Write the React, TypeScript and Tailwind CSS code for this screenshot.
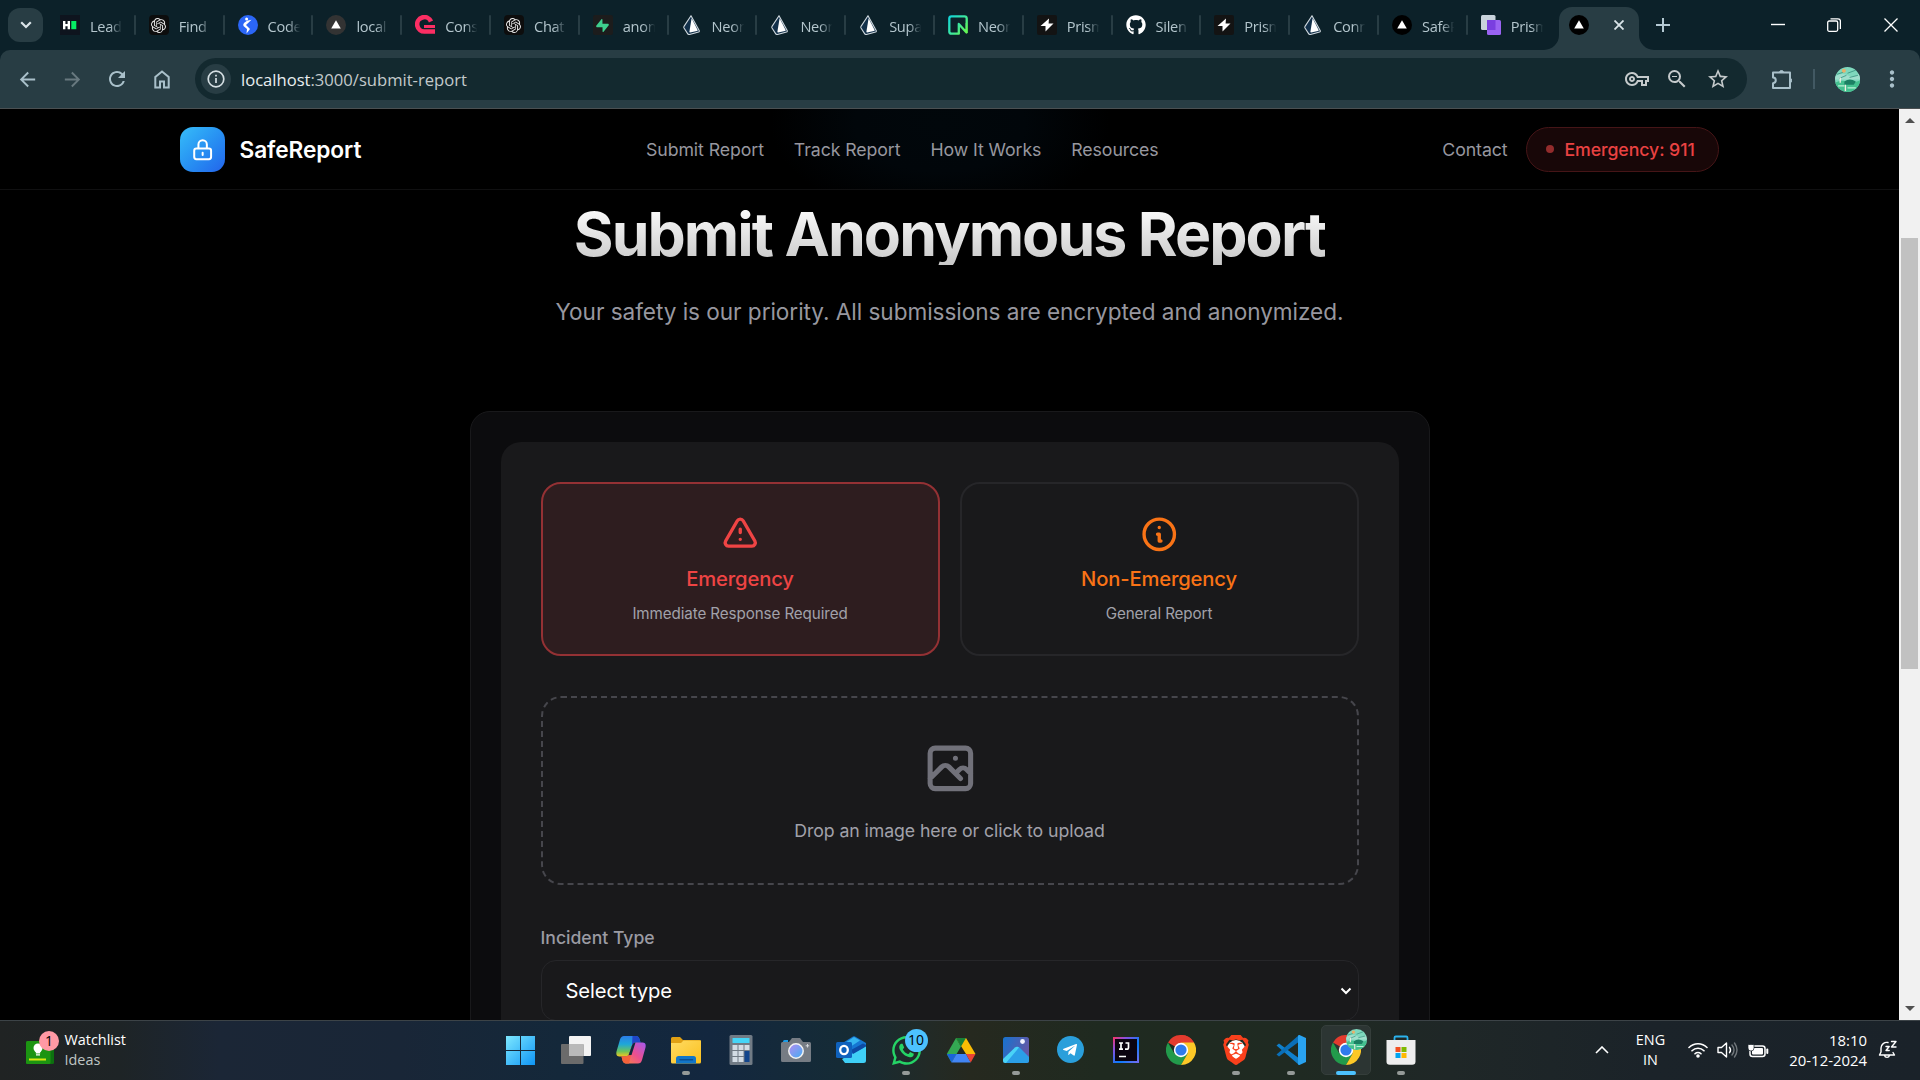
import type { ReactNode } from "react";
import { MdArrowBack, MdArrowForward, MdRefresh, MdOutlineVpnKey, MdZoomOut, MdStarBorder, MdMoreVert } from "react-icons/md";
import { SiOpenai, SiSupabase, SiBrave } from "react-icons/si";
import { FaWhatsapp, FaTelegramPlane, FaGithub } from "react-icons/fa";

/* ---------- favicons ---------- */

const OpenAI = () => (
  <span className="flex size-5 items-center justify-center rounded-[4px] bg-[#0d0d0d] text-[#e8e8e8]"><SiOpenai size={15} /></span>
);
const Prisma = () => (
  <svg viewBox="0 0 20 20" className="size-5">
    <path d="M9 0.7 L17.2 15.6 Q17.6 16.6 16.6 17 L7.4 19.5 Q6.2 19.6 5.6 18.6 L2 13 Q1.6 12.2 2 11.4 Z" fill="#12304a" stroke="#cfd8de" strokeWidth="1.1" strokeLinejoin="round" />
    <path d="M9.6 3.2 L15.6 15 Q15.8 15.8 15 16 L8 17.4 Q7.4 17.4 7.4 16.8 Z" fill="#fff" />
  </svg>
);
const Bolt = ({ green }: { green?: boolean }) => (
  <span className={`flex size-5 items-center justify-center rounded-[2px] ${green ? "bg-[#1c1c1c] text-[#3ecf8e]" : "bg-[#131313] text-white"}`}>
    {green ? <SiSupabase size={13} /> : (
      <svg viewBox="0 0 20 20" className="size-5" fill="#fff"><path d="M12 3.5 L3.5 11 H8.5 V16.5 L16.5 8.5 H11.6 Z" /></svg>
    )}
  </span>
);
const Triangle = ({ grey }: { grey?: boolean }) => (
  <svg viewBox="0 0 20 20" className="size-5">
    <circle cx="10" cy="10" r="10" fill={grey ? "#333333" : "#000"} />
    <path d="M10 5.2 L14.8 13.6 H5.2 Z" fill="#fff" />
  </svg>
);
const Hi = () => (
  <svg viewBox="0 0 20 20" className="size-5">
    <rect width="20" height="20" fill="#0e141e" />
    <path d="M3 6h2.4v3h2.2V6H10v8.200H7.600v-3H5.400v3H3z" fill="#fff" />
    <rect x="11.300" y="6" width="5" height="8.200" fill="#05ec64" />
  </svg>
);
const Code = () => (
  <svg viewBox="0 0 20 20" className="size-5">
    <circle cx="10" cy="10" r="10" fill="#2b66f6" />
    <circle cx="8.600" cy="3.900" r="1.500" fill="#fff" />
    <path d="M13.500 4.800 L8 10 L12 14 L8.500 18.500 L9 14 L5.500 11 Q4.800 9.500 6 8 L9 5.800 Z" fill="#fff" />
  </svg>
);
const Cons = () => (
  <svg viewBox="0 0 20 20" className="size-5">
    <path d="M16 6.500 A7.200 7.200 0 1 0 10 16.500 H20" fill="none" stroke="#fb2e63" strokeWidth="4.600" />
    <path d="M9 10h11v3H9z" fill="#fb2e63" />
  </svg>
);
const Neon = () => (
  <svg viewBox="0 0 20 20" className="size-5">
    <defs>
      <linearGradient id="neon" x1="0" y1="0" x2="1" y2="0.800">
        <stop offset="0" stopColor="#12d4d8" /><stop offset="0.600" stopColor="#40e89a" /><stop offset="1" stopColor="#63f655" />
      </linearGradient>
    </defs>
    <path d="M18.700 18 V3.500 Q18.700 1.300 16.500 1.300 H3.500 Q1.300 1.300 1.300 3.500 V16.500 Q1.300 18.700 3.500 18.700 H10.800 V9 L18.500 17.500 V8" fill="none" stroke="url(#neon)" strokeWidth="2.300" strokeLinejoin="round" />
  </svg>
);
const PrismLayers = () => (
  <svg viewBox="0 0 20 20" className="size-5">
    <rect width="14.500" height="15" rx="1.500" fill="#c9d3dc" />
    <rect x="6" y="5" width="14" height="15" rx="1.500" fill="#9a63f2" />
    <rect x="6" y="5" width="8.500" height="10" fill="#7a3fe0" />
  </svg>
);

const tabs: { icon: ReactNode; title: string }[] = [
  { icon: <Hi />, title: "Lead" },
  { icon: <OpenAI />, title: "Find" },
  { icon: <Code />, title: "Code" },
  { icon: <Triangle grey />, title: "local" },
  { icon: <Cons />, title: "Cons" },
  { icon: <OpenAI />, title: "Chat" },
  { icon: <Bolt green />, title: "anon" },
  { icon: <Prisma />, title: "Neon" },
  { icon: <Prisma />, title: "Neon" },
  { icon: <Prisma />, title: "Supa" },
  { icon: <Neon />, title: "Neon" },
  { icon: <Bolt />, title: "Prism" },
  { icon: <FaGithub size={20} className="text-white" />, title: "Silen" },
  { icon: <Bolt />, title: "Prism" },
  { icon: <Prisma />, title: "Conn" },
  { icon: <Triangle />, title: "SafeR" },
  { icon: <PrismLayers />, title: "Prism" },
];

const Avatar = ({ id, className }: { id: string; className: string }) => (
  <svg viewBox="0 0 24 24" className={className}>
    <clipPath id={id}><circle cx="12" cy="12" r="12" /></clipPath>
    <g clipPath={`url(#${id})`}>
      <rect width="24" height="24" fill="#7fd8bd" />
      <path d="M0 9 Q6 5 12 8 T24 6 V12 H0Z" fill="#a0dfcd" />
      <path d="M2 7 L8 5 M12 6 L20 3 M4 11 L11 8 M14 10 L22 8" stroke="#39937f" strokeWidth="0.800" />
      <path d="M0 15 Q6 12 11 14 T24 13 V24 H0Z" fill="#44c08f" />
      <path d="M9 14 Q14 10 20 14 L18 17 H9Z" fill="#1c7f63" />
      <path d="M3 18 H9 M12 20 H20" stroke="#b9f2d8" strokeWidth="1.200" />
      <path d="M5 10 v5 M10 17 v6" stroke="#f1ede0" strokeWidth="1.300" />
      <circle cx="8.500" cy="3.500" r="1.900" fill="#e8b06a" />
    </g>
  </svg>
);

function TabStrip() {
  return (
    <div className="flex h-[50px] shrink-0 items-start bg-[#0c2129]">
      <div className="ml-2 mt-2 flex h-[34px] w-[35px] items-center justify-center rounded-[12px] bg-[#283d44]">
        <svg viewBox="0 0 12 8" className="h-[8px] w-[12px]" fill="none" stroke="#dbe5e9" strokeWidth="2.200"><path d="M1.200 1.200 6 6l4.800-4.800" /></svg>
      </div>
      <div className="ml-[3px] flex">
        {tabs.map((t, i) => (
          <div key={i} className="flex h-[50px] w-[88.8px] items-center pl-[14px]">
            <span className="size-5 shrink-0">{t.icon}</span>
            <span className="ml-[10px] mt-[2px] w-[33px] overflow-hidden whitespace-nowrap text-[14.6px] leading-5 tracking-[-0.3px] text-[#b4c6cd] [mask-image:linear-gradient(to_right,#000_60%,transparent_98%)]">{t.title}</span>
            <span className={`ml-auto mr-[-1px] h-5 w-[2px] shrink-0 rounded-full ${i < 16 ? "bg-[#283d44]" : ""}`} />
          </div>
        ))}
      </div>
      <div className="flex self-end">
        <svg viewBox="0 0 15 15" className="-ml-[12px] mt-[28px] size-[15px]" fill="#283d44"><path d="M15 0v15H0A15 15 0 0 0 15 0z" /></svg>
        <div className="flex h-[43px] w-[80px] items-center rounded-t-[13px] bg-[#283d44] pb-[7px] pl-[10px]">
          <Triangle />
          <svg viewBox="0 0 10 10" className="ml-[25px] size-[10px]" stroke="#dbe5e9" strokeWidth="1.800"><path d="M.5.5l9 9M9.500.5l-9 9" /></svg>
        </div>
        <svg viewBox="0 0 15 15" className="mt-[28px] size-[15px]" fill="#283d44"><path d="M0 0v15h15A15 15 0 0 1 0 0z" /></svg>
      </div>
      <svg viewBox="0 0 14 14" className="ml-[2px] mt-[18px] size-[14px]" stroke="#b4c9d3" strokeWidth="2"><path d="M7 0v14M0 7h14" /></svg>
      <div className="ml-auto mr-[22px] mt-[18px] flex items-center text-white">
        <svg viewBox="0 0 14 14" className="size-[14px]" stroke="currentColor" strokeWidth="1.400"><path d="M0 6.500h14" /></svg>
        <svg viewBox="0 0 14 14" className="ml-[42px] size-[14px]" fill="none" stroke="currentColor" strokeWidth="1.300"><rect x=".7" y="3" width="10" height="10.300" rx="1.500" /><path d="M3.500.8h7.500a2.400 2.400 0 0 1 2.400 2.400v7.800" /></svg>
        <svg viewBox="0 0 14 14" className="ml-[43px] size-[14px]" stroke="currentColor" strokeWidth="1.300"><path d="M.5.5l13 13M13.500.5l-13 13" /></svg>
      </div>
    </div>
  );
}

function Toolbar() {
  return (
    <div className="bg-[#0c2129]">
      <div className="flex h-[59px] items-center rounded-t-[10px] border-b border-[#4b5052] bg-[#283d44] text-[#a9c0ca]">
        <MdArrowBack size={23} className="ml-4" />
        <MdArrowForward size={23} className="ml-[22px] text-[#68797f]" />
        <MdRefresh size={24} className="ml-[21px]" />
        <svg viewBox="0 0 16 19" className="ml-[25px] h-[19px] w-4" fill="none" stroke="currentColor" strokeWidth="2"><path d="M1.300 17.500V7L8 1.500 14.700 7v10.500H10v-6H6v6z" /></svg>
        <div className="ml-[25px] flex h-[42px] w-[1552px] items-center rounded-full bg-[#13292f] pl-[6px] pr-[17px] text-[#c5cacc]">
          <span className="flex size-[30px] items-center justify-center rounded-full bg-[#283d44]">
            <svg viewBox="0 0 18 18" className="size-[18px]" fill="none" stroke="#d5dfe3" strokeWidth="1.700"><circle cx="9" cy="9" r="7.800" /><path d="M9 8v5M9 4.700v1.800" /></svg>
          </span>
          <span className="ml-[10px] mt-[2px] text-[16.6px] leading-none text-[#c3c9cb]"><span className="text-[#e8eef0]">localhost</span>:3000/submit-report</span>
          <MdOutlineVpnKey size={24} className="ml-auto" />
          <MdZoomOut size={24} className="ml-[16px]" />
          <MdStarBorder size={24} className="ml-[17px]" />
        </div>
        <svg viewBox="0 0 21 21" className="ml-[24px] size-[21px]" fill="none" stroke="currentColor" strokeWidth="2" strokeLinejoin="round"><path d="M2 3.500h17V19H2v-4.800q2.800-.2 2.800-2.900T2 8.500z" /><path d="M8.500 3.500a2 2 0 0 1 4 0zM19 9.500a2 2 0 0 1 0 4z" fill="currentColor" strokeWidth="1" /></svg>
        <span className="ml-[21px] h-5 w-[2px] bg-[#425963]" />
        <Avatar id="toolbar-avatar" className="ml-[20px] size-[25px]" />
        <MdMoreVert size={26} className="ml-[19px]" />
      </div>
    </div>
  );
}

/* ---------- web page ---------- */

function SiteHeader() {
  return (
    <header className="h-[81px] shrink-0 border-b border-[#101011] bg-[radial-gradient(ellipse_170px_95px_at_940px_15px,#01070b_0%,#01060a_50%,#000_100%)]">
      <div className="mx-auto flex h-20 w-[1540px] items-center justify-between text-[17.72px] tracking-[-0.08px] text-[#97979f]">
        <div className="flex items-center">
          <span className="flex size-[45px] items-center justify-center rounded-[13px] bg-linear-to-br from-[#38bdf8] to-[#2563eb]">
            <svg viewBox="0 0 24 24" className="ml-[1px] mt-[1px] size-[25.300px]" fill="none" stroke="#fff" strokeWidth="1.900" strokeLinecap="round" strokeLinejoin="round"><path d="M12 15v2m-6 4h12a2 2 0 002-2v-6a2 2 0 00-2-2H6a2 2 0 00-2 2v6a2 2 0 002 2zm10-10V7a4 4 0 00-8 0v4h8z" /></svg>
          </span>
          <span className="ml-[15px] mt-[2px] text-[22.700px] font-semibold tracking-[-0.1px] text-white">SafeReport</span>
        </div>
        <nav className="mt-[2px] flex gap-[30px] pl-[1px]">
          <a>Submit Report</a>
          <a>Track Report</a>
          <a>How It Works</a>
          <a>Resources</a>
        </nav>
        <div className="flex items-center gap-[19px]">
          <a className="mt-[2px]">Contact</a>
          <span className="flex h-[45px] w-[193px] items-center rounded-full border border-[#451517] bg-[#180708] pl-[19px] font-medium text-[#e94242]">
            <span className="mr-[10px] size-2 rounded-full bg-[#932c2c]" /><span className="mt-[2px]">Emergency: 911</span>
          </span>
        </div>
      </div>
    </header>
  );
}

function TypeCard({ active, icon, title, note }: { active?: boolean; icon: string; title: string; note: string }) {
  return (
    <div className={`flex h-[174px] flex-col items-center rounded-[20px] border-2 pt-[30px] ${active ? "border-[#943134] bg-[#2e1d1f] text-[#ef4444]" : "border-[#262629] text-[#f97316]"}`}>
      <svg viewBox="0 0 24 24" className="size-[40.5px]" fill="none" stroke="currentColor" strokeWidth="2" strokeLinecap="round" strokeLinejoin="round"><path d={icon} /></svg>
      <div className="mt-[11px] text-[20.2px] font-medium leading-7 tracking-[-0.15px]">{title}</div>
      <div className="mt-[11px] text-[15.19px] leading-5 tracking-[-0.1px] text-[#a1a1aa]">{note}</div>
    </div>
  );
}

function Page() {
  return (
    <main className="flex flex-1 flex-col items-center overflow-hidden bg-black font-['Inter',sans-serif]">
      <div className="w-full"><SiteHeader /></div>
      <h1 className="mt-[14px] shrink-0 bg-linear-to-b from-white to-[#c8c8c8] bg-clip-text text-[60.75px] font-bold leading-none tracking-[-1.95px] text-transparent">Submit Anonymous Report</h1>
      <p className="mt-[29px] text-[22.6px] leading-[36px] tracking-[-0.05px] text-[#97979f]">Your safety is our priority. All submissions are encrypted and anonymized.</p>
      <section className="mt-[81px] h-[700px] w-[960px] shrink-0 rounded-[20px] border border-[#19191b] bg-[#0c0c0e] p-[30px]">
        <div className="h-full rounded-[20px] bg-[#19191b] p-10">
          <div className="grid grid-cols-2 gap-5">
            <TypeCard active title="Emergency" note="Immediate Response Required" icon="M12 9v2m0 4h.01m-6.938 4h13.856c1.54 0 2.502-1.667 1.732-3L13.732 4c-.77-1.333-2.694-1.333-3.464 0L3.34 16c-.77 1.333.192 3 1.732 3z" />
            <TypeCard title="Non-Emergency" note="General Report" icon="M13 16h-1v-4h-1m1-4h.01M21 12a9 9 0 11-18 0 9 9 0 0118 0z" />
          </div>
          <div className="mt-10 flex h-[189px] flex-col items-center rounded-[20px] border-2 border-dashed border-[#46464c] pt-10">
            <svg viewBox="0 0 24 24" className="ml-[1px] size-[60.75px]" fill="none" stroke="#71717a" strokeWidth="2" strokeLinecap="round" strokeLinejoin="round"><path d="M4 16l4.586-4.586a2 2 0 012.828 0L16 16m-2-2l1.586-1.586a2 2 0 012.828 0L20 14m-6-6h.01M6 20h12a2 2 0 002-2V6a2 2 0 00-2-2H6a2 2 0 00-2 2v12a2 2 0 002 2z" /></svg>
            <div className="mt-[19px] text-[17.700px] leading-[26px] tracking-[-0.08px] text-[#a1a1aa]">Drop an image here or click to upload</div>
          </div>
          <div className="mt-10 text-[17.6px] font-medium leading-[26px] text-[#9b9ba3]">Incident Type</div>
          <div className="mt-[9px] flex h-[61px] items-center justify-between rounded-[15px] border border-[#262629] pl-6 pr-[6px] pt-[2px] text-[20.2px] tracking-[-0.12px] text-white">
            Select type
            <svg viewBox="0 0 12 8" className="h-[8px] w-[12px]" fill="none" stroke="#fff" strokeWidth="2"><path d="M1.500 1.500 6 6l4.500-4.500" /></svg>
          </div>
        </div>
      </section>
    </main>
  );
}

function Scrollbar() {
  return (
    <div className="flex w-[21px] shrink-0 flex-col items-center bg-[#f1f1f1] py-[9px]">
      <svg viewBox="0 0 10 5" className="h-[5px] w-[10px]" fill="#505050"><path d="M5 0l5 5H0z" /></svg>
      <div className="mt-[115px] h-[431px] w-[17px] bg-[#c1c1c1]" />
      <svg viewBox="0 0 10 5" className="mt-auto h-[5px] w-[10px]" fill="#505050"><path d="M0 0h10L5 5z" /></svg>
    </div>
  );
}

/* ---------- taskbar ---------- */

const Svg = ({ children }: { children: ReactNode }) => <svg viewBox="0 0 30 30" className="size-[30px]">{children}</svg>;

const Chrome = () => (
  <Svg>
    <path d="M15 15 L2 7.500 A15 15 0 0 1 28 7.500 Z" fill="#e33b2e" />
    <path d="M15 0 A15 15 0 0 1 28 7.500 H15Z" fill="#e33b2e" />
    <path d="M2 7.500 A15 15 0 0 0 15 30 L21.500 18.700 L15 15 L8.500 18.700Z" fill="#229a4b" />
    <path d="M28 7.500 A15 15 0 0 1 15 30 L21.500 18.700 L20 10 L15 7.500Z" fill="#fcc827" />
    <circle cx="15" cy="15" r="7.200" fill="#fff" />
    <circle cx="15" cy="15" r="5.600" fill="#2f7bec" />
  </Svg>
);

const apps: { icon: ReactNode; mark?: "dot" | "bar" }[] = [
  { icon: (
    <Svg>
      <linearGradient id="win" x1="0" y1="0" x2="1" y2="1"><stop offset="0" stopColor="#7de8ff" /><stop offset="1" stopColor="#0f95f5" /></linearGradient>
      <path d="M0 1H14v14H0zM15 1H29v14H15zM0 16H14v14H0zM15 16h14v14H15z" fill="url(#win)" />
    </Svg>) },
  { icon: (
    <Svg>
      <rect x="8" y="1" width="22" height="20" rx="1" fill="#f3f3f3" />
      <rect x="0" y="9" width="22.500" height="20" rx="1" fill="#6b6b6b" />
      <rect x="8" y="9" width="14.500" height="12" fill="#b9b9b9" />
    </Svg>) },
  { icon: (
    <Svg>
      <linearGradient id="cpa" x1="0" y1="0" x2="0" y2="1"><stop offset="0" stopColor="#2b7de9" /><stop offset=".4" stopColor="#1ea7d8" /><stop offset=".75" stopColor="#6cc35a" /><stop offset="1" stopColor="#f3c71e" /></linearGradient>
      <linearGradient id="cpb" x1="1" y1="0" x2="0" y2="1"><stop offset="0" stopColor="#a259f0" /><stop offset=".5" stopColor="#ec4f8f" /><stop offset="1" stopColor="#fb8a3c" /></linearGradient>
      <path d="M8 1H20Q22.500 1 23.500 4L24.500 7.500H20Q17 7.500 16 10.500L13 19.500Q12 21.500 9 21.500H3.500Q-.5 21.500.5 16.500L4 4.500Q5 1 8 1z" fill="url(#cpa)" />
      <path d="M16.500 1H20Q22.500 1 23.500 4L24.500 7.500H20Q17 7.500 16 10.500z" fill="#1f46c8" />
      <path d="M22 28.500H10Q7.500 28.500 6.500 25.500L5.500 21.500H9Q12 21.500 13 19.500L16 10.500Q17 7.500 20 7.500H26.500Q30.500 7.500 29.500 12.500L26 25Q25 28.500 22 28.500z" fill="url(#cpb)" />
      <path d="M12.500 20.500 16 10.500Q17 7.500 19.500 7.500L15.500 20z" fill="#102a3c" />
      <path d="M10 28.500Q7.500 28.500 6.500 25.500L5.500 21.500H9Q12 21.500 12.500 20.500L15 20 13 28.500z" fill="#f4623a" />
    </Svg>) },
  { mark: "dot", icon: (
    <Svg>
      <path d="M0 3.500Q0 2 1.500 2H9l3 3H28.500Q30 5 30 6.500V12H0z" fill="#e0a014" />
      <linearGradient id="fold" x1="0" y1="0" x2="1" y2="1"><stop offset="0" stopColor="#ffdb63" /><stop offset="1" stopColor="#fbc01d" /></linearGradient>
      <path d="M0 8H10L12.500 5.500H30V27Q30 28.500 28.500 28.500H1.500Q0 28.500 0 27z" fill="url(#fold)" />
      <path d="M5 28.500V23.500Q5 21 7.500 21H22.500Q25 21 25 23.500V28.500z" fill="#1276c8" />
      <path d="M9 24.700h12.500" stroke="#0b4f93" strokeWidth="1.500" strokeLinecap="round" />
    </Svg>) },
  { icon: (
    <Svg>
      <rect x="3.500" width="23" height="30" rx="1.500" fill="#717b85" />
      <rect x="6.500" y="3" width="17" height="5" rx=".5" fill="#45d5f7" />
      <path d="M6.500 10h5v5h-5zM12.500 10h5v5h-5zM18.500 10h5v5h-5zM6.500 16h5v5h-5zM12.500 16h5v5h-5zM6.500 22h5v5h-5zM12.500 22h5v5h-5z" fill="#d3dce4" />
      <path d="M18.500 16h5v11h-5z" fill="#12458c" />
    </Svg>) },
  { icon: (
    <Svg>
      <path d="M2 6.500Q2 5 3.500 5H7v4H2z" fill="#1c9be6" />
      <path d="M1.500 7H8L11 3H19L22 7H28.500Q30 7 30 8.500V25.500Q30 27 28.500 27H1.500Q0 27 0 25.500V8.500Q0 7 1.500 7z" fill="#767c84" />
      <linearGradient id="lens" x1="0" y1="0" x2="1" y2="1"><stop offset="0" stopColor="#b48cf2" /><stop offset="1" stopColor="#42aef2" /></linearGradient>
      <circle cx="15" cy="16" r="7.200" fill="url(#lens)" stroke="#f2f2f2" strokeWidth="1.500" />
      <path d="M26.500 9v3.500M24.700 10.800h3.500" stroke="#d5d8dc" />
    </Svg>) },
  { icon: (
    <Svg>
      <path d="M5 9 17 1.500Q18 1 19 1.500L30 8V12L14 22 5 18z" fill="#1676d2" />
      <path d="M9 8 18 2 24 5.500 14 12z" fill="#35b4ef" />
      <path d="M30 10V25.500Q30 28 27.500 28H9L6 24 27 13z" fill="#3fd0f7" />
      <path d="M27 8.500 30 10V11.500L17 19 15 15z" fill="#0d4aa5" />
      <rect y="7" width="16" height="16" rx="1.500" fill="#0f62bd" />
      <ellipse cx="8" cy="15" rx="3.800" ry="4.200" fill="none" stroke="#fff" strokeWidth="2.300" />
    </Svg>) },
  { mark: "dot", icon: (
    <span className="relative block size-[30px] text-[#25d366]">
      <FaWhatsapp size={33} className="-ml-[1px] -mt-[1px]" />
      <span className="absolute -top-[6px] left-[14px] flex size-[23px] items-center justify-center rounded-full bg-[#4cc2ff] text-[14px] leading-none text-black">10</span>
    </span>) },
  { icon: (
    <Svg>
      <path d="M10 3H20L29.500 19H20z" fill="#fbbc04" />
      <path d="M10 3 15 11.500 5.500 27.500 .8 19z" fill="#34a853" />
      <path d="M10 3H20L15 11.500z" fill="#188038" />
      <path d="M.8 19H10.500L5.500 27.500z" fill="#1a63d8" />
      <path d="M10.500 19H20L24.700 27.500H5.500z" fill="#4285f4" />
      <path d="M20 19H29.500L24.700 27.500z" fill="#ea4335" />
    </Svg>) },
  { mark: "dot", icon: (
    <Svg>
      <linearGradient id="pho" x1="0" y1="0" x2="1" y2=".4"><stop offset="0" stopColor="#1673cf" /><stop offset="1" stopColor="#6358a8" /></linearGradient>
      <rect x="2" y="2" width="26" height="26" rx="2.500" fill="url(#pho)" />
      <path d="M3 26.500 14 13Q16.500 10.500 19 13L28 22V25.500Q28 28 25.500 28H4.500z" fill="#2b9fe8" />
      <path d="M2 24 14 12.500Q16 11 18 12.500L5 28H4.500Q2 28 2 25.500z" fill="#49d3f7" />
      <circle cx="21.500" cy="6.500" r="2.400" fill="#f2f2ff" />
    </Svg>) },
  { icon: (
    <span className="flex size-[27px] items-center justify-center rounded-full bg-[#2a9fdb] text-white"><FaTelegramPlane size={16} className="-ml-[2px]" /></span>) },
  { icon: (
    <Svg>
      <linearGradient id="ij" x1="0" y1="0" x2="1" y2="1"><stop offset="0" stopColor="#fe315d" /><stop offset=".25" stopColor="#8b4fe0" /><stop offset=".6" stopColor="#087cfa" /><stop offset="1" stopColor="#7a6cf0" /></linearGradient>
      <rect x="2" y="2" width="26" height="26" fill="url(#ij)" />
      <rect x="4" y="4" width="22" height="22" fill="#0b0410" />
      <path d="M8 8h4M10 8v6M8 14.200h4M14.500 8h3v4.500q0 1.700-1.700 1.700H14M8 21.500h7" fill="none" stroke="#fff" strokeWidth="1.700" />
    </Svg>) },
  { icon: <Chrome /> },
  { mark: "dot", icon: <span className="relative block"><span className="absolute inset-x-[6px] inset-y-[5px] rounded-full bg-white" /><SiBrave size={30} className="relative text-[#f9401c]" /></span> },
  { mark: "dot", icon: (
    <Svg>
      <path d="M.5 10.500 3 8.500 24 24V30L22.500 29.500z" fill="#1080cc" />
      <path d="M.5 19.500 3 21.500 24 6V0L22.500.5z" fill="#0a6fb8" />
      <path d="M22 .5 23.500 0 30 3V27L23.500 30 22 29.500z" fill="#29a3f0" />
    </Svg>) },
  { mark: "bar", icon: <span className="relative block"><Chrome /><Avatar id="task-avatar" className="absolute -top-[6px] left-[15px] size-[21px]" /></span> },
  { mark: "dot", icon: (
    <Svg>
      <path d="M8.500 7V2.800Q8.500 1.500 9.800 1.500H20.200Q21.500 1.500 21.500 2.800V7" fill="none" stroke="#2bb3ee" strokeWidth="1.800" />
      <path d="M.5 5H29.500V26.500Q29.500 29.800 26.200 29.800H3.800Q.5 29.800.5 26.500z" fill="#eeeeee" />
      <path d="M9.500 12h5v5h-5z" fill="#f25022" /><path d="M15.500 12h5v5h-5z" fill="#7fba00" /><path d="M9.500 18h5v5h-5z" fill="#00a4ef" /><path d="M15.500 18h5v5h-5z" fill="#ffb900" />
    </Svg>) },
];

function Taskbar() {
  return (
    <div className="flex h-[60px] shrink-0 border-t border-[#3c4347] bg-[linear-gradient(90deg,#202323_0px,#1e2426_120px,#1b2636_220px,#192637_400px,#14283a_560px,#13273f_710px,#152b36_840px,#222a26_930px,#26291f_970px,#1f2a20_1100px,#1f2a22_1300px,#1f2727_1450px,#1b2329_1650px,#1a2229_1920px)] pb-[2px] text-[14.4px] text-white">
      <div className="flex w-[493px] items-center">
        <div className="relative ml-[26px] h-[30px] w-[33px]">
          <svg viewBox="0 0 28 23" className="mt-[6px] h-[23px] w-[28px]">
            <rect width="28" height="23" rx="1.500" fill="#0d700f" /><rect width="24.500" height="23" rx="1.500" fill="#1c9412" />
            <circle cx="12" cy="7" r="4.500" fill="#fff" /><path d="M9.800 9h4.400v3.500H9.800zM10 13.300h4v1.200h-4z" fill="#fff" />
            <rect x="3" y="17.500" width="17" height="2" fill="#d9e80f" />
          </svg>
          <span className="absolute -top-[4px] left-[13px] flex size-5 items-center justify-center rounded-full bg-[#ff99a4] text-[14px] leading-none text-black">1</span>
        </div>
        <div className="ml-[5.500px] leading-5">
          <div>Watchlist</div>
          <div className="text-[#bfc4c4]">Ideas</div>
        </div>
      </div>
      <div className="flex items-center">
        {apps.map((a, i) => (
          <div key={i} className="flex w-[55px] justify-center">
            <div className={`relative flex size-[50px] items-center justify-center rounded-[5px] ${a.mark === "bar" ? "border border-[#353e3b] bg-[#2c3533]" : ""}`}>
              {a.icon}
              {a.mark === "dot" && <span className="absolute bottom-0 left-[21px] h-1 w-2 rounded-full bg-[#959a98]" />}
              {a.mark === "bar" && <span className="absolute -bottom-[1px] left-[14px] h-1 w-5 rounded-full bg-[#4cc2ff]" />}
            </div>
          </div>
        ))}
      </div>
      <div className="ml-auto flex items-center pr-[24px]">
        <svg viewBox="0 0 14 8" className="h-[8px] w-[14px]" fill="none" stroke="#fff" strokeWidth="1.600"><path d="M1 7l6-6 6 6" /></svg>
        <div className="ml-[26px] w-[31px] text-center leading-5"><div>ENG</div><div>IN</div></div>
        <svg viewBox="0 0 20 16" className="ml-[22px] h-[16px] w-[20px]" fill="none" stroke="#fff" strokeWidth="1.600" strokeLinecap="round"><path d="M1 5.500a12.700 12.700 0 0 1 18 0M4 8.800a8.500 8.500 0 0 1 12 0M7 11.800a4.300 4.300 0 0 1 6 0" /><circle cx="10" cy="14" r="1" fill="#fff" /></svg>
        <svg viewBox="0 0 21 18" className="ml-[9px] h-[18px] w-[21px]" fill="none" stroke="#fff" strokeWidth="1.400" strokeLinecap="round" strokeLinejoin="round"><path d="M1 6.500h3.500L9.500 2v14L4.500 11.500H1z" /><path d="M12.500 6.300q2 2.700 0 5.400" /><path d="M15 4q4 5 0 10M17.500 2q5 7 0 14" stroke="#70767a" /></svg>
        <svg viewBox="0 0 22 18" className="ml-[9px] h-[18px] w-[22px]" fill="none" stroke="#fff" strokeWidth="1.500"><rect x="3" y="5" width="15" height="10.500" rx="2.500" /><path d="M20.300 8.500v3.500" strokeWidth="2" strokeLinecap="round" /><rect x="5" y="7" width="11" height="6.500" rx="1" fill="#fff" stroke="none" /><path d="M1 7V3.500h6V7q0 3-3 3T1 7zM2.500 3.500V1M5.500 3.500V1" fill="#fff" stroke="#1a2229" strokeWidth=".7" /></svg>
        <div className="ml-[20px] w-[78px] whitespace-nowrap text-right text-[14.9px] leading-5"><div>18:10</div><div>20-12-2024</div></div>
        <svg viewBox="0 0 19 20" className="ml-[11px] mr-[-1px] h-[20px] w-[19px]" fill="none" stroke="#fff" strokeWidth="1.400" strokeLinecap="round" strokeLinejoin="round"><path d="M10 2.500A5.800 5.800 0 0 0 3 8v4l-1.500 3h15L15 12.500M6.500 15.500a2.600 2.600 0 0 0 5 0" /><path d="M13.500 1.500H18L13.500 7H18M8 6.500h3.200L8 10.500h3.200" /></svg>
      </div>
    </div>
  );
}

export default function App() {
  return (
    <div className="flex h-[1080px] w-[1920px] flex-col overflow-hidden bg-black font-['Open_Sans',sans-serif]">
      <TabStrip />
      <Toolbar />
      <div className="flex min-h-0 flex-1 overflow-hidden">
        <Page />
        <Scrollbar />
      </div>
      <Taskbar />
    </div>
  );
}
